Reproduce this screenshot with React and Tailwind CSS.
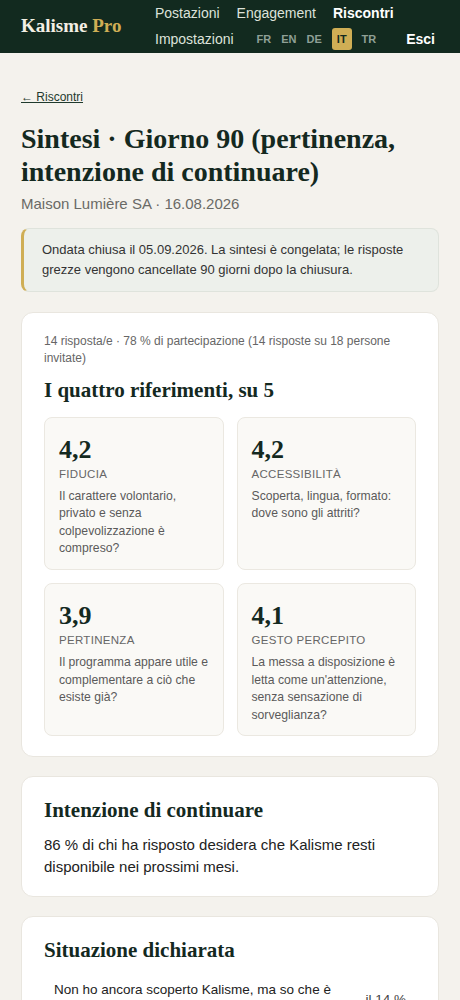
import React from 'react';

const serif = { fontFamily: '"Liberation Serif", "DejaVu Serif", serif' };

function Header() {
  return (
    <header className="bg-[#122a1f] h-[53px] px-[21px] flex items-center">
      <div className="text-[19px] font-bold text-[#f3efe4] w-[134px] shrink-0" style={serif}>
        Kalisme <span className="text-[#cfae55]">Pro</span>
      </div>
      <nav className="flex-1 flex flex-col gap-[6px] text-[14px] leading-[18px] text-[#dde2da]">
        <div className="flex gap-[17px]">
          <a>Postazioni</a>
          <a>Engagement</a>
          <a className="font-semibold text-white">Riscontri</a>
        </div>
        <div className="flex items-center">
          <a>Impostazioni</a>
          <div className="flex items-center gap-[10px] ml-[23px] text-[11px] font-bold text-[#8fa096]">
            <span>FR</span>
            <span>EN</span>
            <span>DE</span>
            <span className="px-[5px] py-[2px] rounded-[3px] bg-[#cfae55] text-[#122a1f]">IT</span>
            <span>TR</span>
          </div>
          <a className="ml-auto mr-[4px] font-bold text-white">Esci</a>
        </div>
      </nav>
    </header>
  );
}

function ScoreCard({ score, label, text }) {
  return (
    <div className="bg-[#faf9f6] border border-[#ebe8e1] rounded-[8px] px-[14px] pt-[17px] pb-[11px]">
      <div className="text-[26px] leading-[30px] font-bold text-[#14291f]" style={serif}>{score}</div>
      <div className="mt-[1px] text-[11.5px] tracking-[0.3px] text-[#666]">{label}</div>
      <p className="mt-[5px] text-[12.2px] leading-[17.5px] text-[#5a5a5a]">{text}</p>
    </div>
  );
}

function Row({ label, value }) {
  return (
    <div className="flex items-center justify-between gap-3 px-[10px] py-[6px] text-[13.5px] leading-[20px] text-[#222]">
      <span className="max-w-[290px]">{label}</span>
      <span className="shrink-0 text-[#444]">{value}</span>
    </div>
  );
}

export default function App() {
  return (
    <div className="min-h-screen bg-[#f4f2ed]" style={{ fontFamily: '"Liberation Sans", Arial, sans-serif' }}>
      <Header />
      <main className="px-[21px] pt-[31px] pb-10">
        <a className="text-[12px] text-[#1f3a2d] underline">← Riscontri</a>
        <h1 className="mt-[14px] text-[28px] leading-[33px] font-bold text-[#14291f]" style={serif}>
          Sintesi · Giorno 90 (pertinenza, intenzione di continuare)
        </h1>
        <p className="mt-[5px] text-[15px] text-[#6a6a66]">Maison Lumière SA · 16.08.2026</p>

        <div className="mt-[12px] bg-[#edf0eb] border border-[#dfe3dc] border-l-[3px] border-l-[#cfae55] rounded-[8px] px-[18px] py-[11px] text-[13px] leading-[20px] text-[#333]">
          Ondata chiusa il 05.09.2026. La sintesi è congelata; le risposte grezze vengono cancellate 90 giorni dopo la chiusura.
        </div>

        <section className="mt-[20px] bg-white border border-[#e9e6df] rounded-[12px] px-[22px] pt-[20px] pb-[20px]">
          <p className="text-[12px] leading-[17px] text-[#666]">
            14 risposta/e · 78 % di partecipazione (14 risposte su 18 persone invitate)
          </p>
          <h2 className="mt-[10px] text-[21px] leading-[26px] font-bold text-[#14291f]" style={serif}>
            I quattro riferimenti, su 5
          </h2>
          <div className="mt-[14px] grid grid-cols-2 gap-[13px]">
            <ScoreCard score="4,2" label="FIDUCIA" text="Il carattere volontario, privato e senza colpevolizzazione è compreso?" />
            <ScoreCard score="4,2" label="ACCESSIBILITÀ" text="Scoperta, lingua, formato: dove sono gli attriti?" />
            <ScoreCard score="3,9" label="PERTINENZA" text="Il programma appare utile e complementare a ciò che esiste già?" />
            <ScoreCard score="4,1" label="GESTO PERCEPITO" text="La messa a disposizione è letta come un'attenzione, senza sensazione di sorveglianza?" />
          </div>
        </section>

        <section className="mt-[19px] bg-white border border-[#e9e6df] rounded-[12px] px-[22px] pt-[20px] pb-[18px]">
          <h2 className="text-[21px] leading-[26px] font-bold text-[#14291f]" style={serif}>Intenzione di continuare</h2>
          <p className="mt-[11px] text-[15px] leading-[22px] text-[#222]">
            86 % di chi ha risposto desidera che Kalisme resti disponibile nei prossimi mesi.
          </p>
        </section>

        <section className="mt-[19px] bg-white border border-[#e9e6df] rounded-[12px] px-[22px] pt-[20px] pb-[18px]">
          <h2 className="text-[21px] leading-[26px] font-bold text-[#14291f]" style={serif}>Situazione dichiarata</h2>
          <div className="mt-[11px]">
            <Row label="Non ho ancora scoperto Kalisme, ma so che è disponibile" value="il 14 %" />
            <Row label="Ho scoperto Kalisme e lo uso di tanto in tanto" value="il 57 %" />
          </div>
        </section>
      </main>
    </div>
  );
}
